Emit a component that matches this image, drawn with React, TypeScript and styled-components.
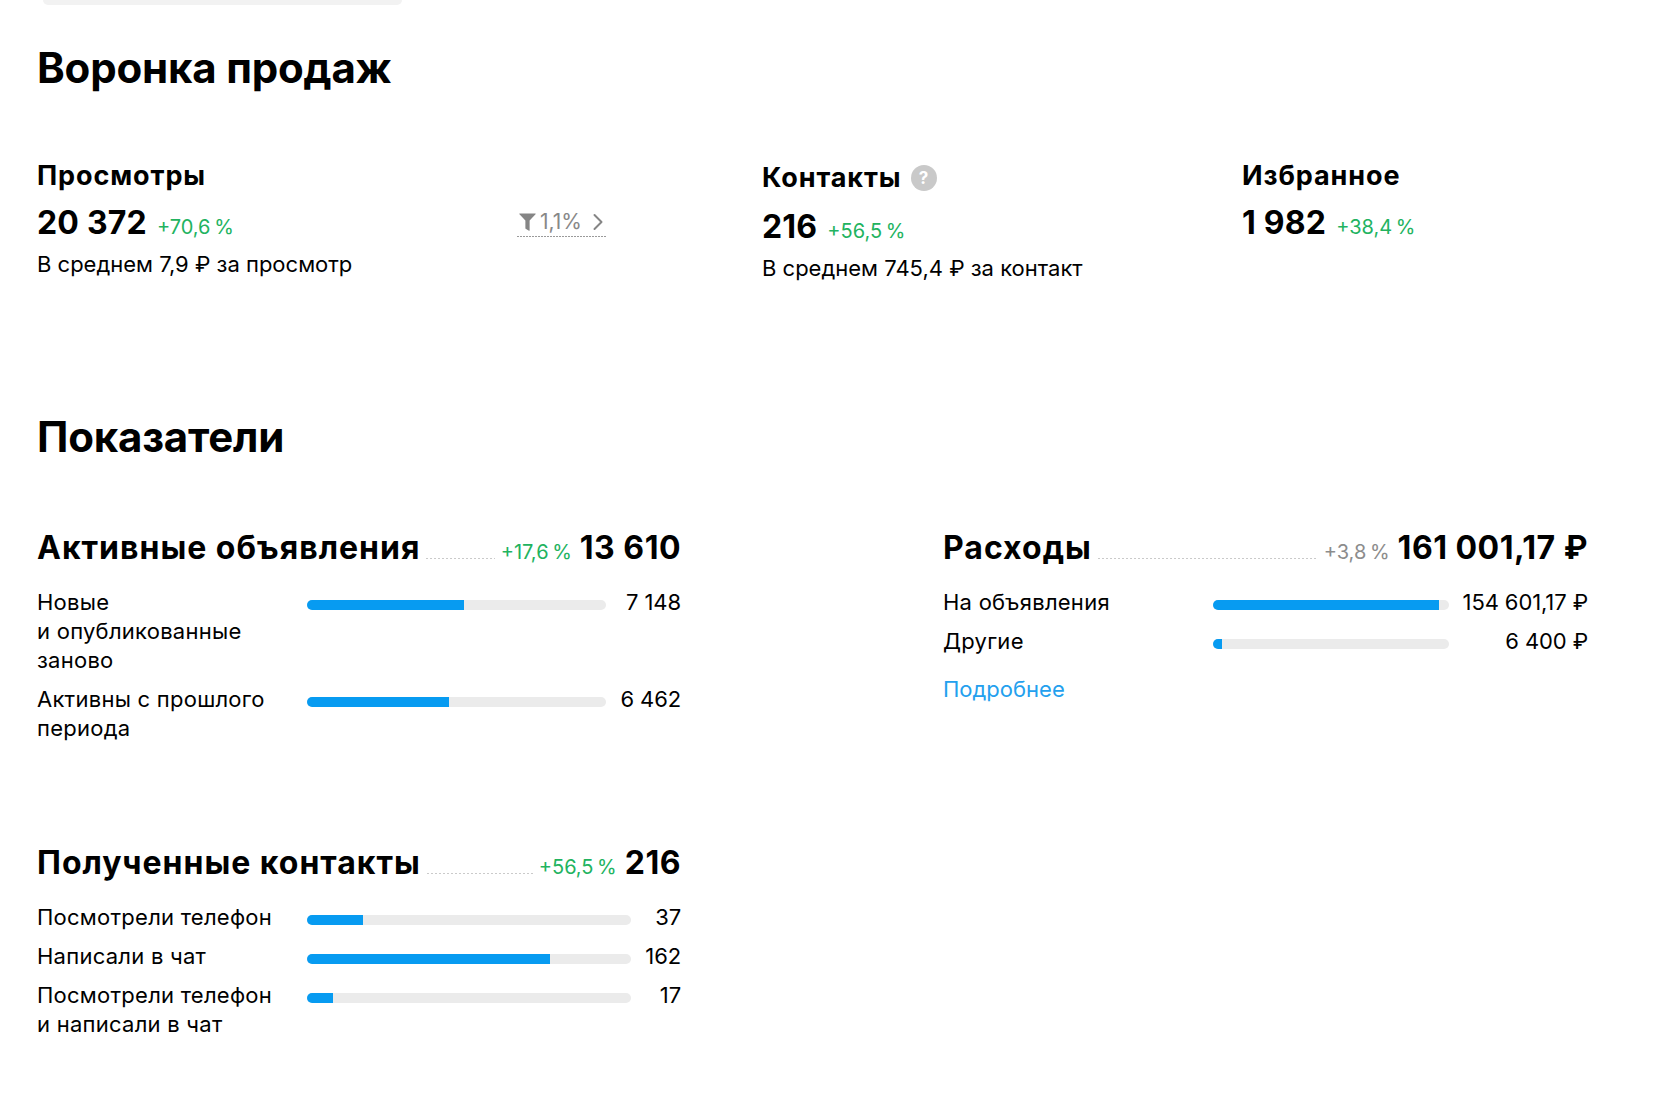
import React from 'react';
import styled, { createGlobalStyle } from 'styled-components';

const GlobalStyle = createGlobalStyle`
  html, body { margin: 0; padding: 0; background: #fff; }
  body {
    font-family: Inter, "Noto Sans", Roboto, sans-serif;
    color: #000;
    -webkit-font-smoothing: antialiased;
  }
  * { box-sizing: border-box; }
`;

const Page = styled.main`
  padding: 0 37px 40px;
`;

const TabStub = styled.div`
  width: 359px;
  height: 5px;
  margin-left: 6px;
  background: #f2f2f2;
  border-radius: 0 0 12px 12px;
`;

const SectionTitle = styled.h1<{ $top: number }>`
  margin: ${(p) => p.$top}px 0 0;
  font-size: 42px;
  line-height: 50px;
  font-weight: 700;
  letter-spacing: -0.2px;
`;

const FunnelRow = styled.section`
  display: grid;
  grid-template-columns: 725px 480px 1fr;
  align-items: start;
  margin-top: 67px;
`;

const Metric = styled.div<{ $width?: number }>`
  display: flex;
  flex-direction: column;
  width: ${(p) => (p.$width ? `${p.$width}px` : 'auto')};
`;

const MetricTitle = styled.div`
  display: flex;
  align-items: center;
  gap: 9px;
  font-size: 27px;
  line-height: 32px;
  font-weight: 700;
  letter-spacing: 0.9px;
`;

const HelpButton = styled.span`
  display: inline-flex;
  align-items: center;
  justify-content: center;
  height: 36px;
`;

const HelpCircle = styled.span`
  display: inline-flex;
  align-items: center;
  justify-content: center;
  width: 26px;
  height: 26px;
  border-radius: 50%;
  background: #c9c9c9;
  color: #fff;
  font-size: 17px;
  line-height: 1;
  font-weight: 700;
  letter-spacing: 0;
`;

const ValueRow = styled.div`
  display: flex;
  align-items: baseline;
  justify-content: space-between;
  margin-top: 11px;
`;

const ValueGroup = styled.div`
  display: flex;
  align-items: baseline;
  gap: 10px;
`;

const BigValue = styled.span`
  font-size: 32px;
  line-height: 40px;
  font-weight: 700;
  letter-spacing: 0.2px;
`;

const Delta = styled.span<{ $muted?: boolean }>`
  font-size: 20px;
  line-height: 24px;
  font-weight: 400;
  color: ${(p) => (p.$muted ? '#8c8c8c' : '#22b35f')};
`;

const MetricNote = styled.div`
  margin-top: 7px;
  font-size: 22px;
  line-height: 28px;
`;

const ConversionBadge = styled.span`
  align-self: center;
  display: inline-flex;
  align-items: baseline;
  gap: 4px;
  padding: 0 2px 3px;
  font-size: 21px;
  line-height: 24px;
  color: #888;
  background: repeating-linear-gradient(to right, #9a9a9a 0 2px, transparent 2px 3px) left bottom / 100% 1px no-repeat;
`;

const BadgeIcon = styled.svg`
  align-self: center;
  flex: none;
`;

const MetricsGrid = styled.section`
  display: grid;
  grid-template-columns: 644px 645px;
  column-gap: 262px;
  align-items: start;
  margin-top: 68px;
`;

const Column = styled.div`
  display: flex;
  flex-direction: column;
  gap: 102px;
`;

const Card = styled.article`
  display: flex;
  flex-direction: column;
`;

const CardHeader = styled.div`
  display: flex;
  align-items: baseline;
`;

const CardTitle = styled.h2`
  margin: 0;
  font-size: 32px;
  line-height: 36px;
  font-weight: 700;
  letter-spacing: 1px;
  white-space: nowrap;
`;

const Leader = styled.span`
  flex: 1;
  align-self: flex-end;
  height: 1px;
  margin: 0 6px 7px;
  background: repeating-linear-gradient(to right, #cacaca 0 2px, transparent 2px 4px);
`;

const HeaderDelta = styled(Delta)`
  margin-right: 8px;
  white-space: nowrap;
`;

const HeaderValue = styled.span`
  font-size: 32px;
  line-height: 36px;
  font-weight: 700;
  letter-spacing: 0.5px;
  white-space: nowrap;
`;

const Rows = styled.div`
  display: grid;
  grid-template-columns: 256px 1fr auto;
  column-gap: 14px;
  row-gap: 10px;
  margin-top: 22px;
`;

const RowLabel = styled.div`
  font-size: 22px;
  line-height: 29px;
  letter-spacing: 0.25px;
`;

const Track = styled.div`
  height: 10px;
  margin-top: 12px;
  border-radius: 5px;
  background: #ebebeb;
  overflow: hidden;
`;

const Fill = styled.div`
  height: 100%;
  background: #079bf1;
`;

const RowValue = styled.div`
  font-size: 22px;
  line-height: 29px;
  letter-spacing: -0.1px;
  text-align: right;
  white-space: nowrap;
`;

const MoreLink = styled.a`
  align-self: flex-start;
  margin-top: 19px;
  font-size: 22px;
  line-height: 29px;
  color: #23a0ee;
  text-decoration: none;
`;

type Row = { label: string; value: string; share: number };

type CardData = {
  title: string;
  delta: string;
  mutedDelta?: boolean;
  total: string;
  rows: Row[];
  link?: string;
};

const NB = '\u00A0';
const TS = '\u2009';

const active: CardData = {
  title: 'Активные объявления',
  delta: `+17,6${TS}%`,
  total: `13${NB}610`,
  rows: [
    { label: `Новые и${NB}опубликованные заново`, value: `7${NB}148`, share: 7148 / 13610 },
    { label: 'Активны с прошлого периода', value: `6${NB}462`, share: 6462 / 13610 },
  ],
};

const contacts: CardData = {
  title: 'Полученные контакты',
  delta: `+56,5${TS}%`,
  total: '216',
  rows: [
    { label: 'Посмотрели телефон', value: '37', share: 37 / 216 },
    { label: 'Написали в чат', value: '162', share: 162 / 216 },
    { label: `Посмотрели телефон и${NB}написали в${NB}чат`, value: '17', share: 17 / 216 },
  ],
};

const expenses: CardData = {
  title: 'Расходы',
  delta: `+3,8${TS}%`,
  mutedDelta: true,
  total: `161${NB}001,17${NB}₽`,
  rows: [
    { label: 'На объявления', value: `154${NB}601,17${NB}₽`, share: 154601.17 / 161001.17 },
    { label: 'Другие', value: `6${NB}400${NB}₽`, share: 6400 / 161001.17 },
  ],
  link: 'Подробнее',
};

const StatCard: React.FC<{ data: CardData }> = ({ data }) => (
  <Card>
    <CardHeader>
      <CardTitle>{data.title}</CardTitle>
      <Leader />
      <HeaderDelta $muted={data.mutedDelta}>{data.delta}</HeaderDelta>
      <HeaderValue>{data.total}</HeaderValue>
    </CardHeader>
    <Rows>
      {data.rows.map((r) => (
        <React.Fragment key={r.label}>
          <RowLabel>{r.label}</RowLabel>
          <Track>
            <Fill style={{ width: `${(r.share * 100).toFixed(2)}%` }} />
          </Track>
          <RowValue>{r.value}</RowValue>
        </React.Fragment>
      ))}
    </Rows>
    {data.link && <MoreLink href="#">{data.link}</MoreLink>}
  </Card>
);

const FunnelIcon = () => (
  <BadgeIcon width="17" height="18" viewBox="0 0 16 17">
    <path d="M0.5 0.5 H15.5 Q16 0.5 15.6 1.1 L10 7.2 V16.3 Q10 17 9.4 16.7 L6.6 15.2 Q6 14.9 6 14.2 V7.2 L0.4 1.1 Q0 0.5 0.5 0.5 Z" fill="#858585" />
  </BadgeIcon>
);

const ChevronIcon = () => (
  <BadgeIcon width="12" height="18" viewBox="0 0 12 18" style={{ marginLeft: 6 }}>
    <path d="M2.5 2 L9.5 9 L2.5 16" fill="none" stroke="#858585" strokeWidth="2" strokeLinecap="round" strokeLinejoin="round" />
  </BadgeIcon>
);

export default function App() {
  return (
    <>
      <GlobalStyle />
      <Page>
        <TabStub />
        <SectionTitle $top={38}>Воронка продаж</SectionTitle>
        <FunnelRow>
          <Metric $width={569}>
            <MetricTitle>Просмотры</MetricTitle>
            <ValueRow>
              <ValueGroup>
                <BigValue>20{NB}372</BigValue>
                <Delta>+70,6{TS}%</Delta>
              </ValueGroup>
              <ConversionBadge>
                <FunnelIcon />
                <span>1,1%</span>
                <ChevronIcon />
              </ConversionBadge>
            </ValueRow>
            <MetricNote>В среднем 7,9 ₽ за просмотр</MetricNote>
          </Metric>
          <Metric>
            <MetricTitle>
              Контакты
              <HelpButton>
                <HelpCircle>?</HelpCircle>
              </HelpButton>
            </MetricTitle>
            <ValueRow>
              <ValueGroup>
                <BigValue>216</BigValue>
                <Delta>+56,5{TS}%</Delta>
              </ValueGroup>
            </ValueRow>
            <MetricNote>В среднем 745,4 ₽ за контакт</MetricNote>
          </Metric>
          <Metric>
            <MetricTitle>Избранное</MetricTitle>
            <ValueRow>
              <ValueGroup>
                <BigValue>1{NB}982</BigValue>
                <Delta>+38,4{TS}%</Delta>
              </ValueGroup>
            </ValueRow>
          </Metric>
        </FunnelRow>
        <SectionTitle $top={130}>Показатели</SectionTitle>
        <MetricsGrid>
          <Column>
            <StatCard data={active} />
            <StatCard data={contacts} />
          </Column>
          <Column>
            <StatCard data={expenses} />
          </Column>
        </MetricsGrid>
      </Page>
    </>
  );
}
